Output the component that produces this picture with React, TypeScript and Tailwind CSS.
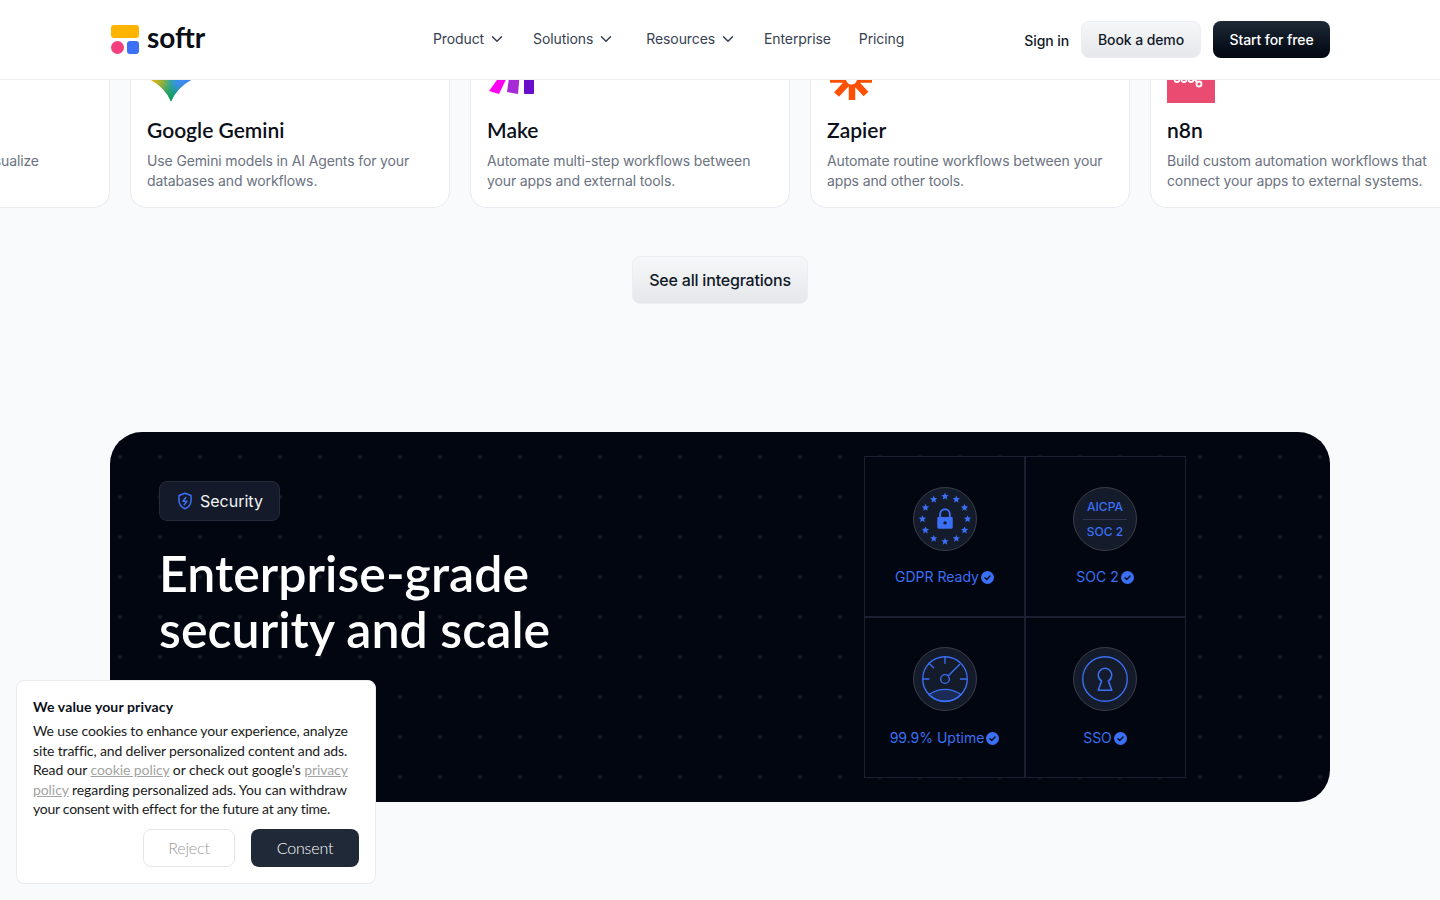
import React from 'react';
import { ChevronDown } from 'lucide-react';

const BLUE = '#3b6ff5';

// Verified tick used next to the compliance labels
const CheckBadge = () => (
  <svg width="13" height="13" viewBox="0 0 13 13" className="shrink-0">
    <circle cx="6.5" cy="6.5" r="6.5" fill={BLUE} />
    <path d="M3.9 6.7l1.8 1.7 3.4-3.5" fill="none" stroke="#0b1020" strokeWidth="1.4" strokeLinecap="round" strokeLinejoin="round" />
  </svg>
);

const starPoints = (cx: number, cy: number, r: number) =>
  Array.from({ length: 10 }, (_, i) => {
    const a = (Math.PI / 5) * i - Math.PI / 2;
    const d = i % 2 === 0 ? r : r * 0.45;
    return `${(cx + Math.cos(a) * d).toFixed(2)},${(cy + Math.sin(a) * d).toFixed(2)}`;
  }).join(' ');

const GdprIcon = () => (
  <svg viewBox="0 0 64 64" className="size-full">
    {Array.from({ length: 12 }, (_, i) => {
      const a = (Math.PI / 6) * i;
      return <polygon key={i} points={starPoints(32 + Math.cos(a) * 23.3, 32 + Math.sin(a) * 23.3, 4)} fill={BLUE} />;
    })}
    <path d="M27 31v-4a5 5 0 0 1 10 0v4" fill="none" stroke={BLUE} strokeWidth="2" />
    <path fillRule="evenodd" d="M25.5 30h13a1.5 1.5 0 0 1 1.5 1.5v9a1.5 1.5 0 0 1-1.500 1.500h-13a1.5 1.5 0 0 1-1.500-1.500v-9a1.5 1.5 0 0 1 1.500-1.500zM32 34.200a1.800 1.800 0 1 0 0 3.600 1.800 1.800 0 0 0 0-3.600z" fill={BLUE} />
  </svg>
);

const SocIcon = () => (
  <div className="flex h-full flex-col items-center justify-center text-[12px] leading-[16px] font-medium" style={{ color: BLUE }}>
    <span>AICPA</span>
    <span className="my-[4px] h-px w-[44px] bg-[#2c3653]" />
    <span>SOC 2</span>
  </div>
);

const GaugeIcon = () => (
  <svg viewBox="0 0 64 64" className="size-full" fill="none" stroke={BLUE} strokeWidth="1.4" strokeLinecap="round">
    <path d="M15.300 48Q32 37.500 48.700 48A23 23 0 0 1 15.300 48z" fill="#1b2b55" />
    <circle cx="32" cy="32" r="23" />
    <circle cx="32" cy="32" r="4.500" />
    <path d="M32 9.700v6M9.300 32h6M48 32h6M15.300 15.700l5 4.600M35.400 28.600L47 17" />
  </svg>
);

const KeyholeIcon = () => (
  <svg viewBox="0 0 64 64" className="size-full" fill="none" stroke={BLUE} strokeWidth="1.4" strokeLinejoin="round">
    <circle cx="32" cy="32" r="23" />
    <path d="M28.500 34A7 7 0 1 1 35.500 34L39 43.700H25z" strokeWidth="1.600" />
  </svg>
);

const cells = [
  { label: 'GDPR Ready', icon: <GdprIcon /> },
  { label: 'SOC 2', icon: <SocIcon /> },
  { label: '99.9% Uptime', icon: <GaugeIcon /> },
  { label: 'SSO', icon: <KeyholeIcon /> },
];

const GEM_PATH = 'M24 2Q26.500 14.500 45 24.500 29.500 33 24 46.500 18.500 33 3 24.500 21.500 14.500 24 2z';

const GeminiLogo = () => (
  <svg viewBox="0 0 48 48" className="size-12">
    <defs>
      <linearGradient id="gem-a" x1="0" y1="0" x2="1" y2="0">
        <stop offset="0" stopColor="#f6b40e" />
        <stop offset="0.28" stopColor="#9cb034" />
        <stop offset="0.5" stopColor="#2fa5a0" />
        <stop offset="0.62" stopColor="#3a8ee8" />
        <stop offset="1" stopColor="#4285f4" />
      </linearGradient>
      <linearGradient id="gem-b" x1="0" y1="0" x2="0" y2="1">
        <stop offset="0.6" stopColor="#0f9d58" stopOpacity="0" />
        <stop offset="0.95" stopColor="#0f9d58" />
      </linearGradient>
    </defs>
    <path d={GEM_PATH} fill="url(#gem-a)" />
    <path d={GEM_PATH} fill="url(#gem-b)" />
  </svg>
);

const MakeLogo = () => (
  <svg viewBox="0 0 48 48" className="size-12">
    <path d="M16.500 16H23L12 39 2 36z" fill="#ff00ee" />
    <path d="M23 16h10l-2 23-11-2z" fill="#a62bd6" />
    <rect x="37" y="10" width="10" height="29" rx="1" fill="#6a0fc9" />
  </svg>
);

const ZapierLogo = () => (
  <svg viewBox="0 0 48 48" className="size-12" stroke="#ff4f00" strokeWidth="6.500" fill="none">
    <path d="M3 24.500H45M25 24v21M24 24L9.500 39.500M25 24l14 15" />
    <circle cx="24.500" cy="24" r="5.500" fill="#fff" stroke="none" />
  </svg>
);

const N8nLogo = () => (
  <svg viewBox="0 0 48 48" className="size-12">
    <rect width="48" height="48" fill="#ea4b71" />
    <g fill="none" stroke="#fff" strokeWidth="1.800">
      <circle cx="10" cy="24.500" r="2.500" />
      <circle cx="17" cy="24.500" r="2.500" />
      <circle cx="24" cy="24.500" r="2.500" />
      <circle cx="32" cy="29" r="2.500" />
      <path d="M26 23l4 4" />
    </g>
  </svg>
);

const integrations = [
  { title: 'Metabase', lines: ['Connect your database, to visualize', 'your data.'], logo: null },
  { title: 'Google Gemini', lines: ['Use Gemini models in AI Agents for your', 'databases and workflows.'], logo: <GeminiLogo /> },
  { title: 'Make', lines: ['Automate multi-step workflows between', 'your apps and external tools.'], logo: <MakeLogo /> },
  { title: 'Zapier', lines: ['Automate routine workflows between your', 'apps and other tools.'], logo: <ZapierLogo /> },
  { title: 'n8n', lines: ['Build custom automation workflows that', 'connect your apps to external systems.'], logo: <N8nLogo /> },
];

const NavLink = ({ label, menu, className }: { label: string; menu?: boolean; className?: string }) => (
  <a className={`flex items-center text-[14px] tracking-[-0.1px] text-[#374151] ${className ?? ''}`}>
    {label}
    {menu && <ChevronDown size={18} strokeWidth={2} className="ml-[4px] text-[#374151]" />}
  </a>
);

export default function App() {
  return (
    <div className="relative h-[900px] overflow-hidden bg-[#f9fafc] font-['Inter',sans-serif] text-[#0b0f19]">
      {/* Header sits over the scrolled page */}
      <header className="absolute inset-x-0 top-0 z-10 flex h-[80px] items-center border-b border-[#eef0f3] bg-white pl-[111px] pr-[110px]">
        <div className="flex w-[322px] items-center">
          <div className="flex w-[28px] flex-col gap-[3px]">
            <span className="h-[13px] rounded-[3px] bg-[#ffb400]" />
            <span className="flex justify-between">
              <span className="size-[13px] rounded-full bg-[#f43f7f]" />
              <span className="size-[12.500px] rounded-[3px] bg-[#3b6ff5]" />
            </span>
          </div>
          <span className="ml-[8px] mt-[-5px] font-['Lato',sans-serif] text-[28px] leading-none font-bold text-[#0a0d14]">softr</span>
        </div>
        <nav className="mt-[-2px] flex items-center">
          <NavLink label="Product" menu />
          <NavLink label="Solutions" menu className="ml-[27px]" />
          <NavLink label="Resources" menu className="ml-[31px]" />
          <NavLink label="Enterprise" className="ml-[27px]" />
          <NavLink label="Pricing" className="ml-[28px]" />
        </nav>
        <div className="ml-auto flex items-center">
          <a className="mt-[2px] text-[14px] font-medium tracking-[-0.1px] text-[#111827]">Sign in</a>
          <button className="ml-[12px] h-[37px] w-[120px] rounded-[8px] border border-[#eceef1] bg-gradient-to-b from-[#f6f7f8] to-[#e5e7eb] text-[14px] font-medium tracking-[-0.1px] text-[#111827]">Book a demo</button>
          <button className="ml-[12px] h-[37px] w-[117px] rounded-[8px] bg-gradient-to-b from-[#1f2937] to-[#030712] text-[14px] font-medium tracking-[-0.1px] text-white">Start for free</button>
        </div>
      </header>

      {/* Integration cards */}
      <section className="ml-[-210px] mt-[38px] flex gap-[20px]">
        {integrations.map((item) => (
          <article key={item.title} className="w-[320px] shrink-0 rounded-[16px] border border-[#e9ebef] bg-white p-[16px]">
            <div className="size-12">{item.logo}</div>
            <h3 className="mt-[13px] font-['Lato',sans-serif] text-[21px] leading-[28px] font-semibold text-[#0b0f19]">{item.title}</h3>
            <p className="mt-[7px] whitespace-nowrap text-[14px] leading-[20px] tracking-[-0.13px] text-[#6b7280]">
              {item.lines[0]}
              <br />
              {item.lines[1]}
            </p>
          </article>
        ))}
      </section>

      <div className="mt-[48px] flex justify-center">
        <button className="h-[48px] w-[176px] rounded-[8px] border border-[#eceef1] bg-gradient-to-b from-[#f6f7f8] to-[#e5e7eb] text-[16px] font-medium tracking-[-0.2px] text-[#111827]">See all integrations</button>
      </div>

      {/* Security panel */}
      <section className="mx-[110px] mt-[128px] flex h-[370px] justify-between rounded-[32px] bg-[#020610] bg-[radial-gradient(circle,#181c25_1px,transparent_3px)] bg-[size:40px_40px] bg-[position:-10px_5px] pl-[49px] pr-[144px]">
        <div className="pt-[49px]">
          <div className="flex h-[40px] w-[121px] items-center rounded-[8px] border border-[#252b3a] bg-[#141a29] pl-[17px]">
            <svg width="16" height="18" viewBox="0 0 16 18" fill="none" stroke={BLUE} strokeWidth="1.500" strokeLinejoin="round">
              <path d="M8 1.200l6 2.300v5c0 3.700-2.500 6.700-6 8.300-3.500-1.600-6-4.600-6-8.300v-5z" />
              <path d="M8.800 5.500L6 9.300h4l-2.800 3.500" strokeLinecap="round" />
            </svg>
            <span className="ml-[7px] text-[16px] text-[#f3f4f6]">Security</span>
          </div>
          <h2 className="mt-[24px] font-['Lato',sans-serif] text-[50px] leading-[56px] font-semibold tracking-[0.05px] text-white">
            Enterprise-grade
            <br />
            security and scale
          </h2>
        </div>
        <div className="mt-[24px] grid h-[322px] w-[322px] grid-cols-2 grid-rows-2 border border-[#1a2030] bg-[#020610]">
          {cells.map((cell, i) => (
            <div
              key={cell.label}
              className={`flex flex-col items-center ${i % 2 === 0 ? 'border-r border-[#1a2030]' : 'border-l border-[#1a2030] pr-[1px]'} ${i < 2 ? 'border-b border-b-[#1a2030] pt-[30px]' : 'border-t border-t-[#1a2030] pt-[29px]'}`}
            >
              <div className="size-[64px] rounded-full border border-[#3a3f4a] bg-[#141b2a]">{cell.icon}</div>
              <div className={`${i < 2 ? 'mt-[16px]' : 'mt-[17px]'} flex items-center gap-[2px] text-[14px] leading-[20px]`} style={{ color: BLUE }}>
                {cell.label}
                <CheckBadge />
              </div>
            </div>
          ))}
        </div>
      </section>

      {/* Cookie consent */}
      <aside className="absolute bottom-[16px] left-[16px] z-20 h-[204px] w-[360px] rounded-[8px] border border-[#e9ebef] bg-white px-[16px] pt-[16px] font-['Lato',sans-serif] text-[14px] tracking-[-0.14px] text-[#1a1a1a]">
        <h4 className="text-[14px] leading-[20px] font-bold tracking-[0.14px] text-[#0b0f19]">We value your privacy</h4>
        <p className="mt-[4px] whitespace-nowrap leading-[19.600px]">
          We use cookies to enhance your experience, analyze
          <br />
          site traffic, and deliver personalized content and ads.
          <br />
          <span className="tracking-[-0.08px]">
            Read our <span className="text-[#a3a3a3] underline">cookie policy</span> or check out google's <span className="text-[#a3a3a3] underline">privacy</span>
          </span>
          <br />
          <span className="tracking-[-0.08px]">
            <span className="text-[#a3a3a3] underline">policy</span> regarding personalized ads. You can withdraw
          </span>
          <br />
          <span className="tracking-[-0.26px]">your consent with effect for the future at any time.</span>
        </p>
        <div className="mt-[10px] flex justify-end gap-[16px]">
          <button className="h-[38px] w-[92px] rounded-[8px] border border-[#e5e5e5] bg-white text-[16px] font-light text-[#9a9a9a]">Reject</button>
          <button className="h-[38px] w-[108px] rounded-[8px] bg-[#1f2937] text-[16px] font-light text-white">Consent</button>
        </div>
      </aside>
    </div>
  );
}
